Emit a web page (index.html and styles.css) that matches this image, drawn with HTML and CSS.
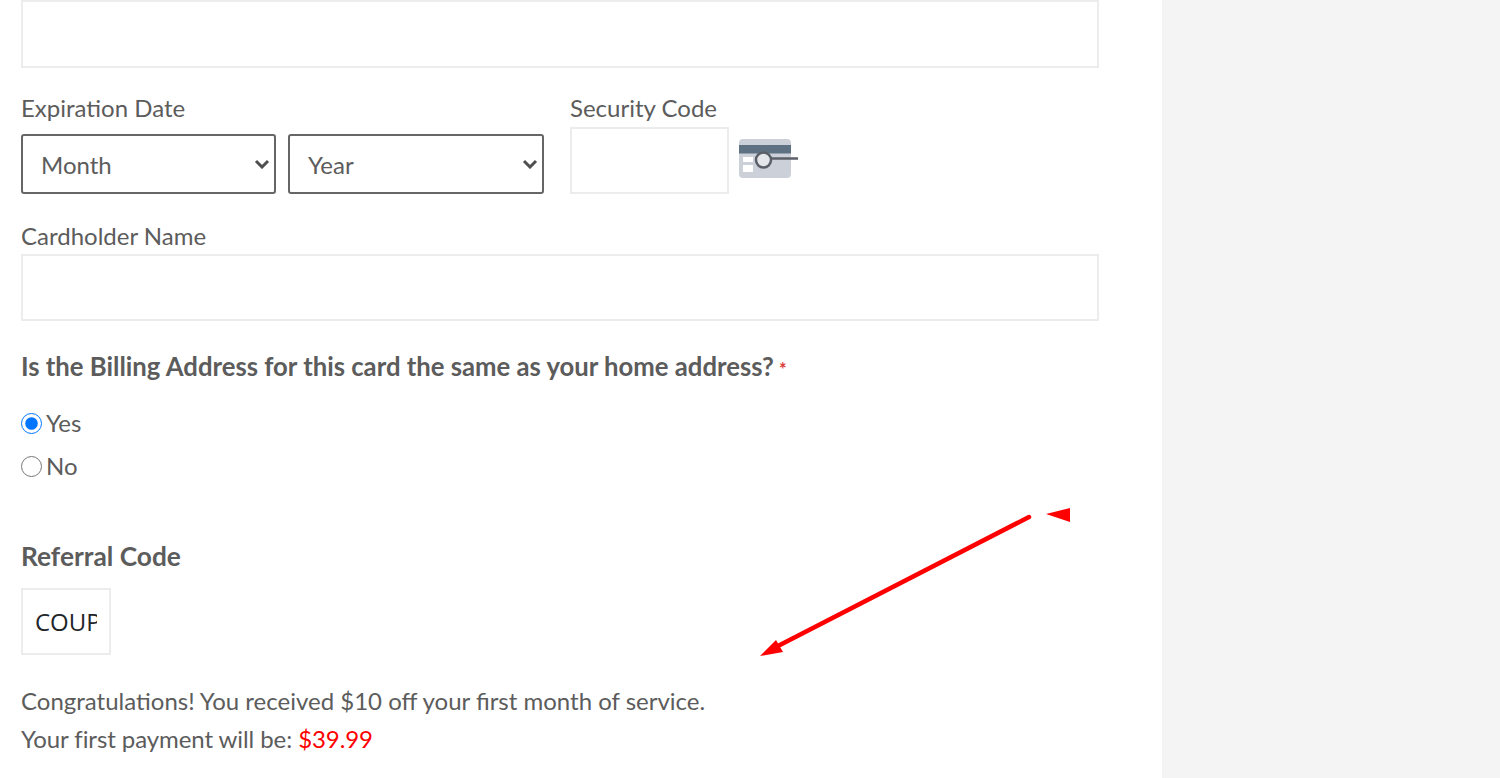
FILE: index.html
```html
<!DOCTYPE html>
<html>
	<head>
		<meta charset="utf-8">
		<title>Payment</title>
		<link rel="stylesheet" href="styles.css">
	</head>
	<body>
		<div class="page-wrapper">
			<div class="form-col">
				<input class="text-field card-number" type="text">

				<div class="card-row">
					<div class="expiry-group">
						<label class="field-label">Expiration Date</label>
						<div class="select-row">
							<div class="select-box month-box">
								<select class="date-select"><option>Month</option></select>
								<svg class="select-arrow" width="16" height="10" viewBox="0 0 16 10"><path d="M2 2l6 6 6-6" fill="none" stroke="#4f4f4f" stroke-width="3"/></svg>
							</div>
							<div class="select-box year-box">
								<select class="date-select"><option>Year</option></select>
								<svg class="select-arrow" width="16" height="10" viewBox="0 0 16 10"><path d="M2 2l6 6 6-6" fill="none" stroke="#4f4f4f" stroke-width="3"/></svg>
							</div>
						</div>
					</div>
					<div class="security-group">
						<label class="field-label">Security Code</label>
						<div class="security-row">
							<input class="text-field security-input" type="text">
							<svg class="cvv-icon" width="60" height="40" viewBox="0 0 60 40">
								<rect x="0" y="0" width="52" height="39" rx="4" fill="#ccd0d8"/>
								<rect x="0" y="6" width="52" height="8.500" fill="#5e7182"/>
								<rect x="4" y="18" width="10" height="5" fill="#fff"/>
								<rect x="4" y="26" width="10" height="7" fill="#fff"/>
								<circle cx="24.500" cy="21" r="7.500" fill="#e4e6ea" stroke="#5b6068" stroke-width="2.500"/>
								<line x1="32" y1="19.500" x2="59" y2="19.500" stroke="#5b6068" stroke-width="2.500"/>
							</svg>
						</div>
					</div>
				</div>

				<label class="field-label name-label">Cardholder Name</label>
				<input class="text-field" type="text">

				<p class="question">Is the Billing Address for this card the same as your home address?<span class="required">*</span></p>

				<label class="radio-row yes-row"><input type="radio" name="billing" checked>Yes</label>
				<label class="radio-row no-row"><input type="radio" name="billing">No</label>

				<p class="referral-title">Referral Code</p>
				<input class="text-field referral-input" type="text" value="COUPON">

				<p class="promo-line first-line">Congratulations! You received $10 off your first month of service.</p>
				<p class="promo-line payment-line">Your first payment will be: <span class="price">$39.99</span></p>
			</div>
			<div class="side-col"></div>

			<svg class="annotation" width="330" height="160" viewBox="750 500 330 160">
				<line x1="1029" y1="517" x2="776" y2="647" stroke="#fe0000" stroke-width="4.500" stroke-linecap="round"/>
				<polygon points="760,656 776,640 783,652" fill="#fe0000"/>
				<polygon points="1046,514 1070,508 1070,522" fill="#fe0000"/>
			</svg>
		</div>
	</body>
</html>
```

FILE: styles.css
```css
html, body{
	margin: 0;
	padding: 0;
	height: 100%;
	overflow: hidden;
}
body{
	font-family: "Lato", "Liberation Sans", sans-serif;
	font-size: 24px;
	color: #5c5c5c;
	background: #fff;
}
p{
	margin: 0;
}
.page-wrapper{
	position: relative;
	display: flex;
	height: 778px;
}
.form-col{
	width: 1162px;
	box-sizing: border-box;
	padding-left: 21px;
	display: flex;
	flex-direction: column;
	align-items: flex-start;
}
.side-col{
	flex: 1;
	background: #f4f4f4;
}
.annotation{
	position: absolute;
	left: 750px;
	top: 500px;
}

.text-field{
	display: block;
	box-sizing: border-box;
	width: 1078px;
	height: 67px;
	flex: none;
	border: 2px solid #ececec;
	background: #fff;
	outline: none;
	margin: 0;
}
.card-number{
	height: 68px;
}

.card-row{
	display: flex;
	margin-top: 26px;
}
.expiry-group{
	width: 549px;
}
.field-label{
	display: block;
	height: 33px;
	line-height: 28px;
}
.select-row{
	display: flex;
	gap: 12px;
	padding-top: 7px;
}
.select-box{
	position: relative;
	height: 60px;
}
.month-box{
	width: 255px;
}
.year-box{
	width: 256px;
}
.select-arrow{
	position: absolute;
	right: 6px;
	top: 25px;
	pointer-events: none;
}
.date-select{
	display: block;
	box-sizing: border-box;
	width: 100%;
	height: 60px;
	padding-left: 18px;
	font-family: inherit;
	font-size: 24px;
	color: #5c5c5c;
	background: #fff;
	border: 2px solid #666;
	border-radius: 3px;
	appearance: none;
}
.security-row{
	display: flex;
	align-items: flex-start;
}
.security-input{
	width: 159px;
	height: 67px;
}
.cvv-icon{
	margin: 12px 0 0 10px;
}

.name-label{
	margin-top: 25px;
	height: 35px;
	line-height: 33px;
}
.question{
	margin-top: 27px;
	line-height: 36px;
	font-size: 25.700px;
	font-weight: 700;
}
.required{
	margin-left: 5px;
	font-size: 18px;
	color: #d9383a;
}
.radio-row{
	display: flex;
	align-items: center;
	height: 30px;
	line-height: 30px;
}
.radio-row input{
	width: 21px;
	height: 21px;
	margin: 0 4px 0 0;
	accent-color: #0075ff;
}
.yes-row{
	margin-top: 21px;
}
.no-row{
	margin-top: 13px;
}

.referral-title{
	margin-top: 57px;
	line-height: 36px;
	font-size: 26.300px;
	font-weight: 700;
}
.referral-input{
	margin-top: 14px;
	width: 90px;
	padding: 0 12px;
	font-family: "Open Sans", sans-serif;
	font-size: 24px;
	color: #212529;
}
.promo-line{
	line-height: 38px;
}
.first-line{
	margin-top: 27px;
}
.payment-line{
	letter-spacing: -0.080px;
}
.price{
	color: #fe0000;
}
```
